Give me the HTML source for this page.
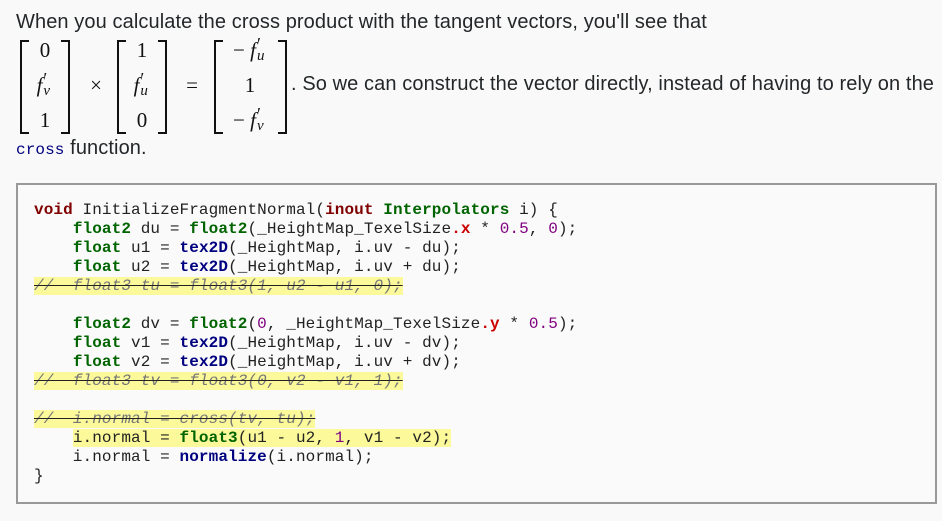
<!DOCTYPE html>
<html><head><style>
body{margin:0;width:945px;height:521px;background:#fff;overflow:hidden;position:relative}
.pg{position:absolute;left:0;top:0;width:942px;height:521px;background:#f9f9f9}
.t{position:absolute;font-family:"Liberation Sans",Arial,sans-serif;font-size:20px;letter-spacing:0.1px;color:#242729;white-space:nowrap}
.m{position:absolute;font-family:"Liberation Serif",serif;font-size:21px;color:#111;text-align:center;white-space:nowrap}
.bl,.br{position:absolute;top:40px;height:90px;width:7px;border:2.5px solid #111}
.bl{border-right:none}.br{border-left:none}
.code{position:absolute;left:16px;top:183px;width:917px;height:317px;border:2px solid #999;background:#fafafa}
pre{margin:0;position:absolute;left:16px;top:16px;font-family:"Liberation Mono","Courier New",monospace;font-size:16px;letter-spacing:0.1px;line-height:19px;color:#222}
.k{color:#006400;font-weight:bold}.v{color:#800000;font-weight:bold}.f{color:#000080;font-weight:bold}.n{color:#800080}.r{color:#c00;font-weight:bold}
.c{background:#fbf99a;color:#777;font-style:italic;text-decoration:line-through;text-decoration-color:#222}
.h{background:#fbf99a}
i{font-style:italic}
.pr{display:inline-block;vertical-align:top;line-height:12px;font-size:14px;text-align:left;width:10px;margin-left:1px}
.pr b{display:block;font-weight:normal;font-size:18px;height:12px}
.pr em{display:block;font-size:15px}
</style></head><body>
<div class="pg"></div>
<div class="t" style="left:16px;top:11px">When you calculate the cross product with the tangent vectors, you'll see that</div>
<div class="bl" style="left:20px"></div><div class="br" style="left:61px"></div>
<div class="m" style="left:24px;top:38px;width:42px">0</div>
<div class="m" style="left:24px;top:73px;width:42px"><i>f</i><span class="pr"><b>′</b><em>v</em></span></div>
<div class="m" style="left:24px;top:108px;width:42px">1</div>
<div class="m" style="left:84px;top:73px;width:24px">×</div>
<div class="bl" style="left:117px"></div><div class="br" style="left:158px"></div>
<div class="m" style="left:121px;top:38px;width:42px">1</div>
<div class="m" style="left:121px;top:73px;width:42px"><i>f</i><span class="pr"><b>′</b><em>u</em></span></div>
<div class="m" style="left:121px;top:108px;width:42px">0</div>
<div class="m" style="left:180px;top:73px;width:24px">=</div>
<div class="bl" style="left:214px"></div><div class="br" style="left:278px"></div>
<div class="m" style="left:218px;top:38px;width:64px">− <i>f</i><span class="pr"><b>′</b><em>u</em></span></div>
<div class="m" style="left:218px;top:73px;width:64px">1</div>
<div class="m" style="left:218px;top:108px;width:64px">− <i>f</i><span class="pr"><b>′</b><em>v</em></span></div>
<div class="t" style="left:291px;top:73px">. So we can construct the vector directly, instead of having to rely on the</div>
<div class="t" style="left:16px;top:137px"><span style="font-family:'Liberation Mono',monospace;font-size:16px;color:#000080">cross</span> function.</div>
<div class="code"><pre><span class="v">void</span> InitializeFragmentNormal(<span class="v">inout</span> <span class="k">Interpolators</span> i) {
    <span class="k">float2</span> du = <span class="k">float2</span>(_HeightMap_TexelSize<span class="r">.x</span> * <span class="n">0.5</span>, <span class="n">0</span>);
    <span class="k">float</span> u1 = <span class="f">tex2D</span>(_HeightMap, i.uv - du);
    <span class="k">float</span> u2 = <span class="f">tex2D</span>(_HeightMap, i.uv + du);
<span class="c">//  float3 tu = float3(1, u2 - u1, 0);</span>

    <span class="k">float2</span> dv = <span class="k">float2</span>(<span class="n">0</span>, _HeightMap_TexelSize<span class="r">.y</span> * <span class="n">0.5</span>);
    <span class="k">float</span> v1 = <span class="f">tex2D</span>(_HeightMap, i.uv - dv);
    <span class="k">float</span> v2 = <span class="f">tex2D</span>(_HeightMap, i.uv + dv);
<span class="c">//  float3 tv = float3(0, v2 - v1, 1);</span>

<span class="c">//  i.normal = cross(tv, tu);</span>
    <span class="h">i.normal = <span class="k">float3</span>(u1 - u2, <span class="n">1</span>, v1 - v2);</span>
    i.normal = <span class="f">normalize</span>(i.normal);
}</pre></div>
</body></html>
